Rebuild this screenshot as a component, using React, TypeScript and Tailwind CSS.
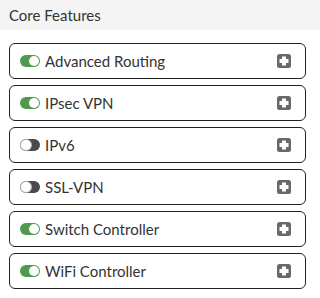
const features = [
  { name: 'Advanced Routing', on: true },
  { name: 'IPsec VPN', on: true },
  { name: 'IPv6', on: false },
  { name: 'SSL-VPN', on: false },
  { name: 'Switch Controller', on: true },
  { name: 'WiFi Controller', on: true },
];

function Toggle({ on }: { on: boolean }) {
  return (
    <span
      className={`relative inline-block w-[20px] h-[12px] rounded-full shrink-0 ${
        on ? 'bg-[#4f9a4f]' : 'bg-[#4a4a4a]'
      }`}
    >
      <span
        className={`absolute top-[1px] w-[10px] h-[10px] rounded-full bg-white ${
          on ? 'right-[1px]' : 'left-[1px] shadow-[0_0_0_1px_#bbb]'
        }`}
      />
    </span>
  );
}

function PlusIcon() {
  return (
    <svg width="14" height="14" viewBox="0 0 14 14" className="shrink-0">
      <rect x="0" y="0" width="14" height="14" rx="2.5" fill="#686868" />
      <rect x="5" y="2.5" width="4" height="9" fill="#fff" />
      <rect x="2.5" y="5" width="9" height="4" fill="#fff" />
    </svg>
  );
}

export default function App() {
  return (
    <div className="w-[320px] h-[298px] bg-white font-['Lato',sans-serif] text-[#333]">
      {/* Header */}
      <div className="h-[30px] bg-[#f4f4f4] px-[9px] flex items-center text-[15px]">
        Core Features
      </div>

      {/* Feature list */}
      <div className="pl-[9px] pr-[14px] pt-[13px] flex flex-col gap-[6px]">
        {features.map((f) => (
          <div
            key={f.name}
            className="h-[36px] border border-[#222] rounded-[6px] flex items-center pl-[10px] pr-[14px]"
          >
            <Toggle on={f.on} />
            <span className="ml-[5px] text-[15px] flex-1">{f.name}</span>
            <PlusIcon />
          </div>
        ))}
      </div>
    </div>
  );
}
